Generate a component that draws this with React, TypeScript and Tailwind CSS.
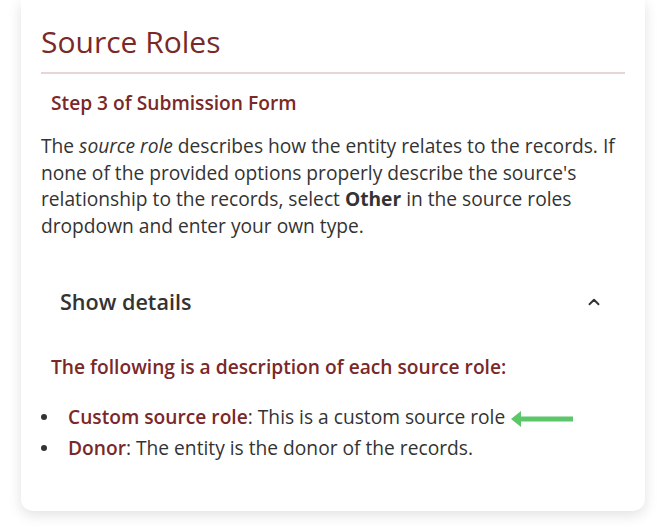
import { ChevronUp } from "lucide-react"

const maroon = "text-[#7a2828]"

function Bullet() {
  return (
    <span className="flex h-[31px] w-[27px] shrink-0 items-center">
      <span className="h-[6px] w-[6px] rounded-full bg-[#333333]" />
    </span>
  )
}

export default function App() {
  return (
    <div className="min-h-[530px] bg-white px-[21px] pb-[20px] font-['Open_Sans',sans-serif]">
      <div className="rounded-b-xl bg-white px-[20px] pt-[22px] pb-[48px] shadow-[0_4px_14px_rgba(0,0,0,0.12)]">
        <h1 className={`text-[30px] leading-[40px] ${maroon}`}>Source Roles</h1>
        <div className="mt-[10px] h-[2px] bg-[#e6d6d6]" />

        <h2 className={`mt-[16px] pl-[10px] text-[19.2px] leading-[26px] font-semibold ${maroon}`}>
          Step 3 of Submission Form
        </h2>

        <p className="mt-[17px] text-[19.2px] leading-[26.5px] text-[#333333]">
          The <em>source role</em> describes how the entity relates to the records. If none of the
          provided options properly describe the source's relationship to the records, select{" "}
          <strong>Other</strong> in the source roles dropdown and enter your own type.
        </p>

        <button className="mt-[34px] flex w-full items-center justify-between py-[14px] pl-[19px] pr-[22px] text-left">
          <span className="text-[21.6px] leading-[30px] font-semibold text-[#333333]">Show details</span>
          <ChevronUp className="h-[18px] w-[18px] text-[#333333]" strokeWidth={2.5} />
        </button>

        <p className={`mt-[23px] pl-[10px] text-[19.2px] leading-[26px] font-semibold ${maroon}`}>
          The following is a description of each source role:
        </p>

        <ul className="mt-[21px] text-[19.2px] leading-[31px] text-[#333333]">
          <li className="flex">
            <Bullet />
            <span>
              <span className={`font-semibold ${maroon}`}>Custom source role</span>: This is a custom
              source role
              <svg className="ml-[6px] inline-block align-middle" width="62" height="20" viewBox="0 0 62 20">
                <path d="M0 10 L10 2 L10 7.5 L62 7.5 L62 12.5 L10 12.5 L10 18 Z" fill="#5cc76a" />
              </svg>
            </span>
          </li>
          <li className="flex">
            <Bullet />
            <span>
              <span className={`font-semibold ${maroon}`}>Donor</span>: The entity is the donor of the
              records.
            </span>
          </li>
        </ul>
      </div>
    </div>
  )
}
